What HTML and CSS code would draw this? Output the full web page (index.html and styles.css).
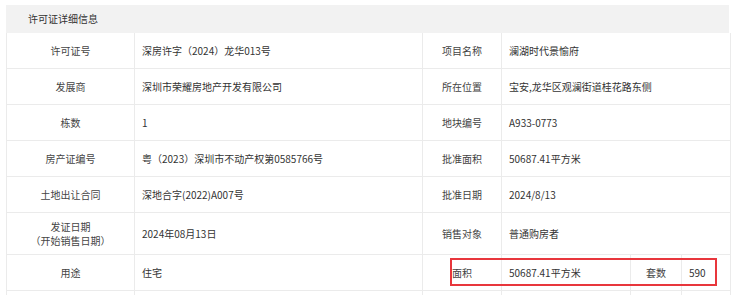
FILE: index.html
```html
<!DOCTYPE html>
<html lang="zh-CN">
<head>
<meta charset="utf-8">
<link rel="stylesheet" href="styles.css">
</head>
<body>
<div class="panel">
  <div class="panel-head">许可证详细信息</div>
  <table class="info">
    <colgroup>
      <col class="c1"><col class="c2"><col class="c3"><col class="c4"><col class="c5"><col class="c6">
    </colgroup>
    <tr>
      <td class="lab">许可证号</td><td class="val">深房许字（2024）龙华013号</td>
      <td class="lab">项目名称</td><td class="val" colspan="3">澜湖时代景愉府</td>
    </tr>
    <tr>
      <td class="lab">发展商</td><td class="val">深圳市荣耀房地产开发有限公司</td>
      <td class="lab">所在位置</td><td class="val" colspan="3">宝安,龙华区观澜街道桂花路东侧</td>
    </tr>
    <tr>
      <td class="lab">栋数</td><td class="val">1</td>
      <td class="lab">地块编号</td><td class="val" colspan="3">A933-0773</td>
    </tr>
    <tr>
      <td class="lab">房产证编号</td><td class="val">粤（2023）深圳市不动产权第0585766号</td>
      <td class="lab">批准面积</td><td class="val" colspan="3">50687.41平方米</td>
    </tr>
    <tr>
      <td class="lab">土地出让合同</td><td class="val">深地合字(2022)A007号</td>
      <td class="lab">批准日期</td><td class="val" colspan="3">2024/8/13</td>
    </tr>
    <tr class="tall">
      <td class="lab"><span class="ln">发证日期</span><span class="ln">（开始销售日期）</span></td><td class="val">2024年08月13日</td>
      <td class="lab">销售对象</td><td class="val" colspan="3">普通购房者</td>
    </tr>
    <tr class="mark-row">
      <td class="lab">用途</td><td class="val">住宅</td>
      <td class="lab">面积</td><td class="val">50687.41平方米</td>
      <td class="lab">套数</td><td class="val">590</td>
    </tr>
    <tr class="more">
      <td></td><td></td><td></td><td></td><td></td><td></td>
    </tr>
  </table>
  <div class="highlight"></div>
</div>
</body>
</html>
```
FILE: styles.css
```css
html, body {
  margin: 0;
  padding: 0;
  background: #ffffff;
}
body {
  padding: 5px 0 0 6px;
  font-family: "Noto Sans CJK SC", "Noto Sans", sans-serif;
  font-size: 10px;
  color: #333333;
}
.panel {
  position: relative;
  width: 723px;
}
.panel-head {
  height: 28px;
  line-height: 28px;
  padding-left: 22px;
  background: #f2f2f2;
  color: #333333;
}
.info {
  width: 724px;
  border-collapse: collapse;
  table-layout: fixed;
}
.info col.c1 { width: 128px; }
.info col.c2 { width: 288px; }
.info col.c3 { width: 79px; }
.info col.c4 { width: 129px; }
.info col.c5 { width: 51px; }
.info col.c6 { width: 49px; }
.info td {
  border: 1px solid #ebebeb;
  height: 35px;
  padding: 0;
  vertical-align: middle;
  white-space: nowrap;
}
.info td.lab {
  text-align: center;
  color: #444444;
}
.info td.val {
  text-align: left;
  padding-left: 7px;
}
.info tr:first-child td { border-top: none; }
.info tr.tall td {
  height: 41px;
}
.ln {
  display: block;
  line-height: 14px;
}
.info tr.more td {
  height: 20px;
}
.highlight {
  position: absolute;
  left: 444px;
  top: 253px;
  width: 263px;
  height: 24px;
  border: 2px solid #e8363c;
}
```
